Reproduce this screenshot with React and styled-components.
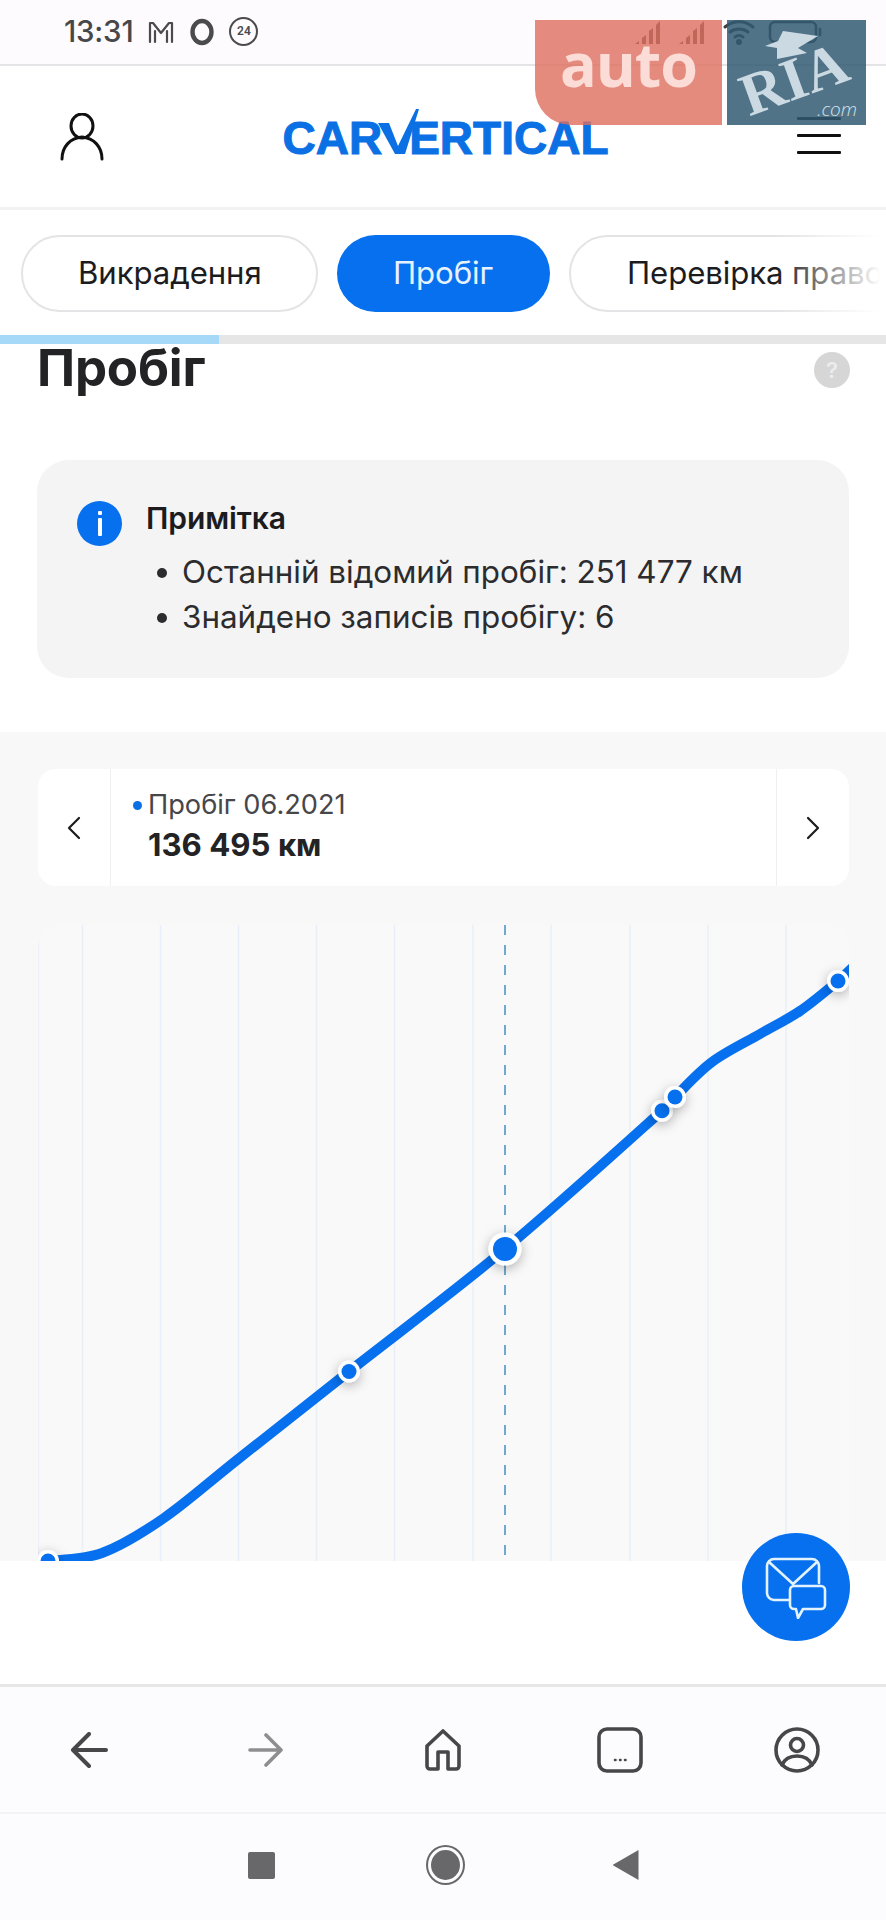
import React from 'react';
import styled, { createGlobalStyle } from 'styled-components';

const Global = createGlobalStyle`
  html, body { margin: 0; padding: 0; background: #fff; }
  * { box-sizing: border-box; }
  body { font-family: Inter, "Noto Sans", sans-serif; color: #1f1f21; }
`;

const Page = styled.div`
  position: relative; width: 886px; height: 1920px; overflow: hidden;
  display: flex; flex-direction: column; background: #fff;
`;

/* status bar */
const StatusBar = styled.div`
  height: 66px; flex: none; background: #fdfbfd; border-bottom: 2px solid #e4e3e5;
  padding: 0 64px; display: flex; align-items: center; gap: 14px; color: #4b4b4d;
`;
const Clock = styled.span`font: 500 29.5px/1 Inter, sans-serif; color: #47474a; margin-top: -1px; letter-spacing: -0.2px;`;
const StatusRight = styled.div`margin-left: auto; display: flex; align-items: center; gap: 12px;`;
const Counter = styled.span`
  width: 29px; height: 29px; border: 2px solid #4b4b4d; border-radius: 50%;
  display: flex; align-items: center; justify-content: center; font: 600 12px/1 Roboto, sans-serif; margin-top: -2px;
`;

/* header */
const Header = styled.header`
  height: 144px; flex: none; padding: 0 45px 0 60px; border-bottom: 3px solid #f2f2f3;
  display: flex; align-items: center; justify-content: space-between;
`;
const Logo = styled.div`
  display: flex; align-items: flex-end; height: 48px; color: #0b70e4; margin: -12px 10px 0 0;
  font: 700 46px/34px "Liberation Sans", Inter, sans-serif;
  -webkit-text-stroke: 1px #0b70e4;
`;
const LogoStart = styled.span`letter-spacing: 0;`;
const LogoV = styled.svg`width: 41px; height: 48px; margin: 0 -10px 0 -4px; flex: none;`;
const Burger = styled.div`
  width: 44px; height: 37px; display: flex; flex-direction: column; justify-content: space-between; margin-top: -2px;
  & > i { display: block; height: 3px; background: #111; border-radius: 1px; }
`;

/* pills */
const PillBar = styled.nav`
  position: relative; height: 125px; flex: none; padding: 25px 0 0 21px; display: flex; gap: 19px; overflow: hidden;
  &::after { content: ""; position: absolute; right: 0; top: 20px; width: 110px; height: 90px;
    background: linear-gradient(90deg, rgba(255,255,255,0), #fff 95%); }
`;
const Pill = styled.div`
  height: 77px; flex: none; width: ${p => p.$w}px; border-radius: 39px; padding-left: ${p => p.$pad}px;
  display: flex; align-items: center; white-space: nowrap;
  font: 400 31.2px/1 Inter, sans-serif; letter-spacing: -0.1px;
  background: ${p => p.$active ? '#0670ee' : '#fff'};
  color: ${p => p.$active ? '#e6f3ff' : '#1c1c1e'};
  border: ${p => p.$active ? 'none' : '2px solid #e4e4e6'};
`;
const Track = styled.div`height: 9px; flex: none; background: #e6e6e6;`;
const TrackFill = styled.div`height: 100%; background: #a6d8f8;`;

/* title */
const TitleRow = styled.div`
  height: 116px; flex: none; padding: 0 36px 0 37px; display: flex; justify-content: space-between; align-items: flex-start;
`;
const Title = styled.h1`margin: -5px 0 0; font: 700 51px/58px Inter, sans-serif; color: #232325; letter-spacing: -0.2px;`;
const Help = styled.div`
  width: 36px; height: 36px; margin-top: 8px; border-radius: 50%; background: #d6d6d7; color: #ececed;
  display: flex; align-items: center; justify-content: center; font: 600 22px/1 Inter, sans-serif;
`;

/* note */
const Note = styled.section`
  height: 218px; flex: none; margin: 0 37px; border-radius: 32px; background: #f4f4f5;
  padding: 41px 40px 0; display: flex; gap: 24px;
`;
const InfoBadge = styled.div`
  width: 45px; height: 45px; flex: none; border-radius: 50%; background: #0670ee; position: relative;
  &::before { content: ""; position: absolute; left: 21px; top: 10px; width: 3.5px; height: 4px; background: #fff; border-radius: 1px; }
  &::after { content: ""; position: absolute; left: 21px; top: 17px; width: 3.5px; height: 18px; background: #fff; border-radius: 1px; }
`;
const NoteBody = styled.div`min-width: 0; margin-top: -2px;`;
const NoteTitle = styled.div`font: 600 30px/38px Inter, sans-serif; color: #1c1c1e; letter-spacing: -0.1px;`;
const NoteList = styled.ul`margin: 13px 0 0; padding: 0 0 0 36px; list-style: none;`;
const NoteItem = styled.li`
  position: relative; font: 400 31.4px/45px Inter, sans-serif; color: #2c2c2e; white-space: nowrap;
  &::before { content: ""; position: absolute; left: -25px; top: 18px; width: 10px; height: 10px; border-radius: 50%; background: #2c2c2e; }
`;

/* chart section */
const ChartSection = styled.section`
  margin-top: 54px; height: 829px; flex: none; background: #f8f8f9; padding: 37px 37px 0 38px;
  display: flex; flex-direction: column; gap: 39px; overflow: hidden;
`;
const Selector = styled.div`
  height: 117px; flex: none; background: #fff; border-radius: 18px; display: grid; grid-template-columns: 73px 1fr 73px;
`;
const Arrow = styled.div`
  display: flex; align-items: center; justify-content: center; color: #1c1c1e;
  ${p => p.$left ? 'border-right: 1px solid #eff0f2;' : 'border-left: 1px solid #eff0f2;'}
`;
const Reading = styled.div`padding: 19px 0 0 37px;`;
const ReadingLabel = styled.div`
  position: relative; font: 400 27.2px/34px Inter, sans-serif; color: #47474a;
  &::before { content: ""; position: absolute; left: -15px; top: 13px; width: 9px; height: 9px; border-radius: 50%; background: #0b70e4; }
`;
const ReadingValue = styled.div`font: 700 31.2px/38px Inter, sans-serif; color: #232325; margin-top: 4px;`;
const ChartPanel = styled.div`
  flex: 1; background: #f9f9fa; border-radius: 22px 22px 0 0; overflow: hidden;
  & > svg { display: block; width: 811px; height: 636px; overflow: hidden; }
`;

const Spacer = styled.div`height: 123px; flex: none; background: #fff;`;

/* browser nav */
const BrowserNav = styled.nav`
  height: 130px; flex: none; background: #fcfbfd; border-top: 3px solid #e6e6e7; border-bottom: 2px solid #f3f2f4;
  display: grid; grid-template-columns: repeat(5, 1fr); align-items: center; justify-items: center;
`;
const SystemNav = styled.nav`
  height: 106px; flex: none; background: #fcfbfd;
  display: flex; align-items: center; justify-content: center; padding-bottom: 4px;
`;
const SysSquare = styled.div`width: 27px; height: 27px; background: #68686a; border-radius: 2px; margin-right: 151px;`;
const SysCircle = styled.div`
  width: 39px; height: 40px; border-radius: 50%; border: 2px solid #68686a; padding: 3px; background: #fcfbfd; margin-right: 148px;
  &::after { content: ""; display: block; width: 100%; height: 100%; border-radius: 50%; background: #68686a; }
`;
const SysBack = styled.div`
  width: 26px; height: 30px; background: #68686a; clip-path: polygon(100% 0, 100% 100%, 0 50%);
`;

/* overlays */
const Fab = styled.div`
  position: absolute; left: 742px; top: 1533px; width: 108px; height: 108px; border-radius: 50%; background: #0670ee;
  display: flex; align-items: center; justify-content: center;
`;
const AutoMark = styled.div`
  position: absolute; left: 535px; top: 20px; width: 187px; height: 105px; background: rgba(223,110,94,.8);
  border-radius: 0 0 0 36px; display: flex; justify-content: center; color: #fbdcd7;
  font: 700 61px/88px "Open Sans", sans-serif; letter-spacing: -1px;
`;
const RiaMark = styled.div`
  position: absolute; left: 727px; top: 20px; width: 139px; height: 105px; background: rgba(49,90,115,.85); overflow: hidden;
`;
const RiaWord = styled.div`
  position: absolute; left: 12px; top: 29px; transform: rotate(-20deg); color: #cbdae2;
  font: 700 60px/1 "Liberation Serif", serif; white-space: nowrap;
`;
const RiaCom = styled.div`
  position: absolute; right: 9px; top: 80px; color: #d5e1e8; font: italic 300 19px/1 "Open Sans", sans-serif;
`;
const RiaStar = styled.svg`position: absolute; left: 38px; top: 11px; width: 53px; height: 29px;`;

const Icon = ({ w, h, sw = 2.5, c = 'currentColor', children, fill = 'none' }) => (
  <svg width={w} height={h} viewBox={`0 0 ${w} ${h}`} fill={fill} stroke={c} strokeWidth={sw} strokeLinecap="round" strokeLinejoin="round">{children}</svg>
);

const smooth = pts => {
  let d = `M${pts[0][0]} ${pts[0][1]}`;
  for (let i = 0; i < pts.length - 1; i++) {
    const p0 = pts[Math.max(0, i - 1)], p1 = pts[i], p2 = pts[i + 1], p3 = pts[Math.min(pts.length - 1, i + 2)];
    const c1 = [p1[0] + (p2[0] - p0[0]) / 6, p1[1] + (p2[1] - p0[1]) / 6];
    const c2 = [p2[0] - (p3[0] - p1[0]) / 6, p2[1] - (p3[1] - p1[1]) / 6];
    d += `C${c1[0]} ${c1[1]} ${c2[0]} ${c2[1]} ${p2[0]} ${p2[1]}`;
  }
  return d;
};

const curve = [[48,1561],[102,1553],[164,1518],[237,1460],[349,1371.5],[505,1249],[662,1110.7],[675,1097],[712,1062],[760,1034],[800,1011],[838,981],[852,968]];
const gridX = [82.5,160.5,238.5,316.5,394.5,473,551,630,708,786];
const dots = [[48,1561,11,7.5],[349,1371.5,11,7.5],[662,1110.7,11,7.5],[675,1097,11,7.5],[838,981,11,7.5],[505,1249,16.5,12]];

export default function App() {
  return (
    <Page>
      <Global />
      <StatusBar>
        <Clock>13:31</Clock>
        <Icon w={28} h={24} sw={2.2}><path d="M3 22V3h3l8 10 8-10h3v19M8 22V11M20 22V11" /></Icon>
        <Icon w={26} h={28} sw={4.4}><ellipse cx="13" cy="14" rx="9.5" ry="11" /></Icon>
        <Counter>24</Counter>
        <StatusRight>
          <Icon w={32} h={26} sw={0} c="none" fill="#4a4a4c"><path d="M1 25h4v-3zM8 25h4V16l-4 3zM15 25h4V9l-4 3zM22 25h4V2l-4 4z" /></Icon>
          <Icon w={32} h={26} sw={0} c="none" fill="#4a4a4c"><path d="M1 25h4v-3zM8 25h4V16l-4 3zM15 25h4V9l-4 3zM22 25h4V2l-4 4z" /></Icon>
          <Icon w={34} h={28} sw={3} c="#3d3d3f"><path d="M3 9c8-7 20-7 28 0M8 14c5-4 13-4 18 0M13 19c2-2 6-2 8 0" /><circle cx="17" cy="24" r="1.5" fill="#3d3d3f" /></Icon>
          <Icon w={54} h={26} sw={2.5} c="#3d3d3f"><rect x="2" y="3" width="46" height="20" rx="5" /><path d="M52 10v6" /></Icon>
        </StatusRight>
      </StatusBar>

      <Header>
        <Icon w={44} h={48} sw={3} c="#111"><ellipse cx="22" cy="13" rx="11" ry="12" /><path d="M2 46c0-12 8-21 20-22 12 1 20 10 20 22" /></Icon>
        <Logo aria-label="carVertical">
          <LogoStart>CAR</LogoStart>
          <LogoV viewBox="0 0 41 48"><path d="M0 16h11l9 23L38 2h3L27 47H17z" fill="#0b70e4" /></LogoV>
          <span>ERTICAL</span>
        </Logo>
        <Burger><i /><i /><i /></Burger>
      </Header>

      <PillBar>
        <Pill $w={297} $pad={55}>Викрадення</Pill>
        <Pill $w={213} $pad={56} $active>Пробіг</Pill>
        <Pill $w={420} $pad={56}>Перевірка право</Pill>
      </PillBar>
      <Track><TrackFill style={{ width: 219 }} /></Track>

      <TitleRow>
        <Title>Пробіг</Title>
        <Help>?</Help>
      </TitleRow>

      <Note>
        <InfoBadge />
        <NoteBody>
          <NoteTitle>Примітка</NoteTitle>
          <NoteList>
            <NoteItem>Останній відомий пробіг: 251 477 км</NoteItem>
            <NoteItem>Знайдено записів пробігу: 6</NoteItem>
          </NoteList>
        </NoteBody>
      </Note>

      <ChartSection>
        <Selector>
          <Arrow $left><Icon w={16} h={24} sw={2.2}><path d="M13 2 3 12l10 10" /></Icon></Arrow>
          <Reading>
            <ReadingLabel>Пробіг 06.2021</ReadingLabel>
            <ReadingValue>136 495 км</ReadingValue>
          </Reading>
          <Arrow><Icon w={16} h={24} sw={2.2}><path d="m3 2 10 10L3 22" /></Icon></Arrow>
        </Selector>
        <ChartPanel>
          <svg viewBox="38 925 811 636">
            <defs>
              <filter id="s" x="-100%" y="-100%" width="300%" height="300%"><feDropShadow dx="0" dy="3" stdDeviation="6" floodColor="#000" floodOpacity=".3" /></filter>
            </defs>
            <line x1="38.5" x2="38.5" y1="925" y2="1561" stroke="#eef1f6" strokeWidth="1.5" />
            {gridX.map(x => <line key={x} x1={x} x2={x} y1="925" y2="1561" stroke="#e9eff8" strokeWidth="1.5" />)}
            <line x1="505" x2="505" y1="925" y2="1561" stroke="#3f8fc4" strokeWidth="1.5" strokeDasharray="10 10" />
            <path d={smooth(curve)} fill="none" stroke="#0670ee" strokeWidth="10" strokeLinecap="round" />
            {dots.map(([x, y, r, ir]) => (
              <g key={x}>
                <circle cx={x} cy={y} r={r} fill="#fff" filter="url(#s)" />
                <circle cx={x} cy={y} r={ir} fill="#0670ee" />
              </g>
            ))}
          </svg>
        </ChartPanel>
      </ChartSection>

      <Spacer />

      <BrowserNav>
        <Icon w={38} h={36} sw={4} c="#47474a"><path d="M36 18H4M19 2 3 18l16 16" /></Icon>
        <Icon w={36} h={34} sw={3.6} c="#8e8e90"><path d="M2 17h31M18 2l15 15-15 15" /></Icon>
        <Icon w={38} h={42} sw={3.6} c="#47474a"><path d="M3 17 19 2l16 15v20a3 3 0 0 1-3 3h-8V23H14v17H6a3 3 0 0 1-3-3z" /></Icon>
        <Icon w={46} h={46} sw={3.6} c="#47474a"><rect x="2" y="2" width="42" height="42" rx="8" /><path d="M18 33h.5M23 33h.5M28 33h.5" strokeWidth="2.6" /></Icon>
        <Icon w={46} h={46} sw={3.6} c="#47474a"><circle cx="23" cy="23" r="21" /><circle cx="23" cy="18" r="6.5" /><path d="M8 38c3-7 9-9 15-9s12 2 15 9" /></Icon>
      </BrowserNav>

      <SystemNav>
        <SysSquare />
        <SysCircle />
        <SysBack />
      </SystemNav>

      <Fab>
        <svg width="64" height="64" viewBox="0 0 64 64" fill="none" stroke="#e3f2ff" strokeWidth="2.6" strokeLinecap="round" strokeLinejoin="round">
          <path d="M26 45H10a7 7 0 0 1-7-7V11a7 7 0 0 1 7-7h38a7 7 0 0 1 7 7v17" />
          <path d="m5 7 24 22L53 7" />
          <path d="M30 31h27a4 4 0 0 1 4 4v15a4 4 0 0 1-4 4H39l-5 9-2-9h-2a4 4 0 0 1-4-4V35a4 4 0 0 1 4-4z" fill="#0670ee" />
        </svg>
      </Fab>

      <AutoMark>auto</AutoMark>
      <RiaMark>
        <RiaWord>RIA</RiaWord>
        <RiaStar viewBox="0 0 53 29"><path d="M18 0l35 5-20 12 9 5-30 6V17L0 15l13-5z" fill="#cbdae2" /></RiaStar>
        <RiaCom>.com</RiaCom>
      </RiaMark>
    </Page>
  );
}
